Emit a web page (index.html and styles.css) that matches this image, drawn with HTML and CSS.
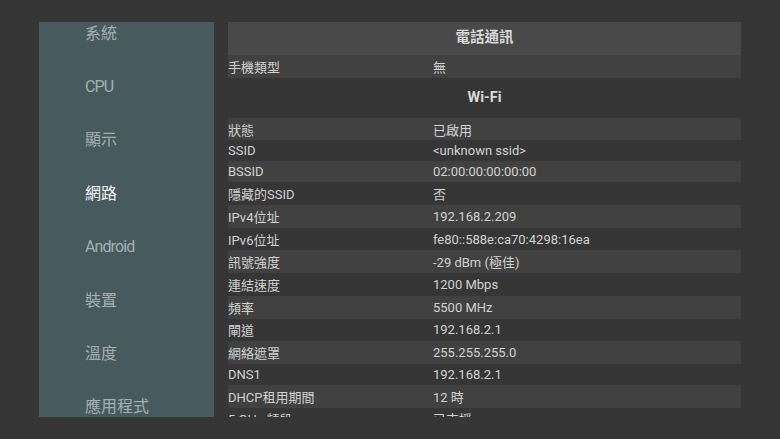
FILE: index.html
```html
<!DOCTYPE html>
<html lang="zh-Hant">
<head>
<meta charset="utf-8">
<title>網路</title>
<link rel="stylesheet" href="styles.css">
</head>
<body>
<div class="screen">
  <nav class="sidebar">
    <ul class="menu">
      <li class="item">系統</li>
      <li class="item latin">CPU</li>
      <li class="item">顯示</li>
      <li class="item active">網路</li>
      <li class="item latin">Android</li>
      <li class="item">裝置</li>
      <li class="item">溫度</li>
      <li class="item">應用程式</li>
    </ul>
  </nav>
  <main class="content">
    <div class="section-head first">電話通訊</div>
    <div class="row tall alt"><span class="label">手機類型</span><span class="value">無</span></div>
    <div class="section-head">Wi-Fi</div>
    <div class="row tall alt"><span class="label">狀態</span><span class="value">已啟用</span></div>
    <div class="row"><span class="label">SSID</span><span class="value">&lt;unknown ssid&gt;</span></div>
    <div class="row alt"><span class="label">BSSID</span><span class="value">02:00:00:00:00:00</span></div>
    <div class="row tall"><span class="label">隱藏的SSID</span><span class="value">否</span></div>
    <div class="row tall alt"><span class="label">IPv4位址</span><span class="value">192.168.2.209</span></div>
    <div class="row tall"><span class="label">IPv6位址</span><span class="value">fe80::588e:ca70:4298:16ea</span></div>
    <div class="row tall alt"><span class="label">訊號強度</span><span class="value">-29 dBm (極佳)</span></div>
    <div class="row tall"><span class="label">連結速度</span><span class="value">1200 Mbps</span></div>
    <div class="row tall alt"><span class="label">頻率</span><span class="value">5500 MHz</span></div>
    <div class="row tall"><span class="label">閘道</span><span class="value">192.168.2.1</span></div>
    <div class="row tall alt"><span class="label">網絡遮罩</span><span class="value">255.255.255.0</span></div>
    <div class="row"><span class="label">DNS1</span><span class="value">192.168.2.1</span></div>
    <div class="row tall alt"><span class="label">DHCP租用期間</span><span class="value">12 時</span></div>
    <div class="row tall"><span class="label">5 GHz 頻段</span><span class="value">已支援</span></div>
  </main>
</div>
</body>
</html>
```

FILE: styles.css
```css
html, body {
  margin: 0;
  padding: 0;
  background: #363636;
  width: 780px;
  height: 439px;
  overflow: hidden;
  font-family: Roboto, "Noto Sans CJK TC", sans-serif;
}

.screen {
  display: flex;
  gap: 14px;
  padding: 22px 0 0 39px;
}

.sidebar {
  width: 175px;
  height: 395px;
  background: #475a5e;
  overflow: hidden;
}

.menu {
  list-style: none;
  margin: -17px 0 0 0;
  padding: 0;
}

.item {
  height: 53.4px;
  display: flex;
  align-items: center;
  padding-left: 46px;
  font-size: 16px;
  color: #a3b0b3;
}

.item.latin {
  letter-spacing: -0.9px;
  padding-top: 3px;
  box-sizing: border-box;
}

.item.active {
  color: #f4f6f6;
}

.content {
  width: 513px;
  height: 395px;
  overflow: hidden;
}

.section-head {
  height: 40px;
  display: flex;
  align-items: center;
  justify-content: center;
  font-size: 14.5px;
  font-weight: bold;
  color: #d8d8d8;
}

.section-head.first {
  height: 33px;
  padding-bottom: 7px;
  box-sizing: border-box;
  background: #494949;
}

.row {
  height: 21px;
  display: flex;
  align-items: center;
  font-size: 13px;
  color: #d2d2d2;
}

.row.tall {
  height: 22.7px;
}

.row.alt {
  background: #414141;
}

.label {
  width: 205px;
  flex: none;
}

.value {
  flex: 1;
}
```
